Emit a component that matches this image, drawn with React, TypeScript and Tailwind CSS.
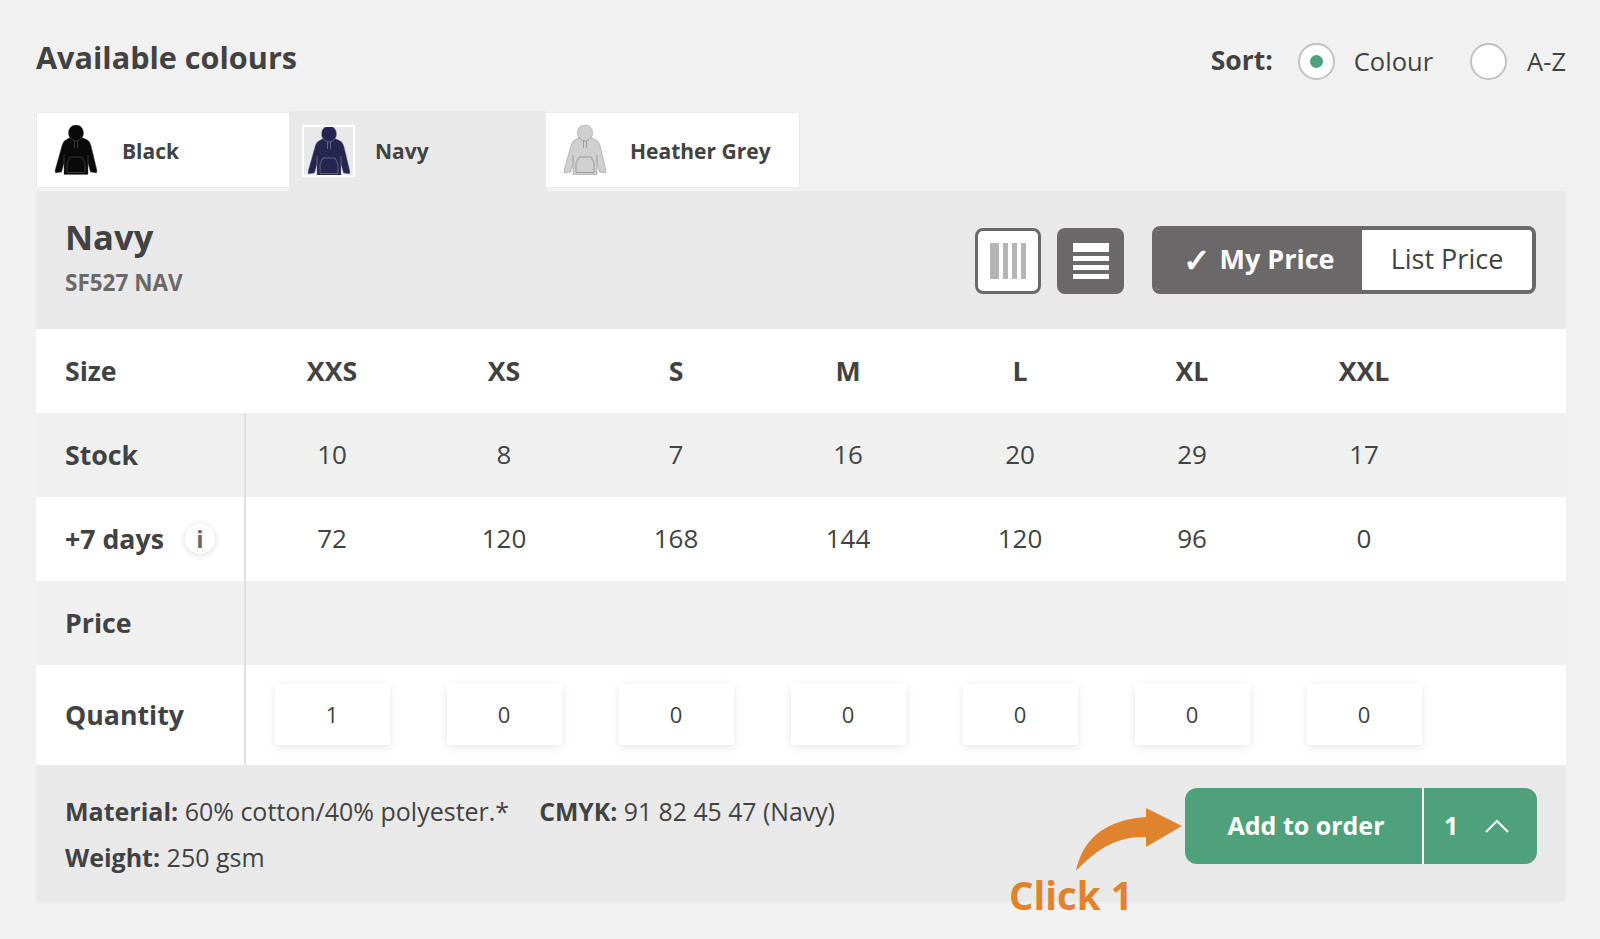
const SIZES = ["XXS", "XS", "S", "M", "L", "XL", "XXL"];
const STOCK = [10, 8, 7, 16, 20, 29, 17];
const INCOMING = [72, 120, 168, 144, 120, 96, 0];
const QUANTITY = [1, 0, 0, 0, 0, 0, 0];

function Hoodie({ fill, line }: { fill: string; line: string }) {
  return (
    <svg viewBox="0 0 44 50" className="w-[44px] h-[50px] shrink-0">
      <path
        d="M22 0c-4.500 0-7.500 3.500-7.500 8 0 2 .5 3.500 1.500 4.500l-3.500 2c-2.500 1.200-3.500 3-4.500 6L1 45.500l.5 2.500 6-1 2.500-8.500V49.500h24V38.500l2.500 8.500 6 1 .5-2.500L37 20.500c-1-3-2-4.800-4.500-6l-4.500-2c1-1 1.500-2.500 1.500-4.500C29.500 3.500 26.500 0 22 0z"
        fill={fill}
        stroke={line}
        strokeWidth={0.4}
      />
      <path
        d="M16 12.500c2 2.500 4 3.500 6 3.500s4-1 6-3.500M20.500 16v7M23.500 16v7M13 38l3-6h12l3 6v9.500H13zM10 38v-8M34 38v-8"
        fill="none"
        stroke={line}
        strokeWidth={0.6}
      />
    </svg>
  );
}

function Radio({ checked }: { checked?: boolean }) {
  return (
    <span className="w-[37px] h-[37px] rounded-full bg-white border-2 border-[#c2c2c2] flex items-center justify-center shrink-0">
      {checked && <span className="w-[13px] h-[13px] rounded-full bg-[#4fa17b]" />}
    </span>
  );
}

function Tab({ label, fill, line, active, width, gap }: { label: string; fill: string; line: string; active?: boolean; width: string; gap: string }) {
  if (active) {
    return (
      <div className={`${width} h-[80px] bg-[#e9e9e9] flex items-center pl-[13px] ${gap}`}>
        <div className="w-[53px] h-[52px] border-2 border-white flex items-center justify-center overflow-hidden">
          <Hoodie fill={fill} line={line} />
        </div>
        <span className="text-[21px] font-bold text-[#424242] mt-[1px]">{label}</span>
      </div>
    );
  }
  return (
    <div className={`${width} h-[74px] my-[2px] bg-white flex items-center pl-[17px] ${gap} shadow-[0_0_0_1px_#ebebeb]`}>
      <Hoodie fill={fill} line={line} />
      <span className="text-[21px] font-bold text-[#424242] mt-[3px]">{label}</span>
    </div>
  );
}

function Row({ label, extra, bg, h, children }: { label: string; extra?: React.ReactNode; bg: string; h: string; children?: React.ReactNode }) {
  return (
    <div className={`flex ${bg} ${h}`}>
      <div className="w-[210px] pl-[29px] flex items-center border-r-[2px] border-[#dfdfdf] text-[26.7px] font-bold text-[#424242] justify-between pr-[32px]">
        <span>{label}</span>
        {extra}
      </div>
      <div className="flex">{children}</div>
    </div>
  );
}

function Cell({ children }: { children: React.ReactNode }) {
  return <div className="w-[172px] flex items-center justify-center text-[26px] text-[#424242] pb-[1px]">{children}</div>;
}

export default function App() {
  return (
    <div
      className="w-[1600px] h-[939px] bg-[#f1f1f1] px-[36px] pt-[37px] overflow-hidden text-[#424242]"
      style={{ fontFamily: '"Open Sans", "Noto Sans", sans-serif' }}
    >
      <div className="flex items-start justify-between h-[74px]">
        <h2 className="text-[30.6px] leading-[42px] font-bold -mt-[1px]">Available colours</h2>
        <div className="flex items-center h-[48px] text-[25.5px] -mr-[2px]">
          <span className="font-bold text-[26.500px] mr-[25px]">Sort:</span>
          <Radio checked />
          <span className="ml-[19px] mr-[37px]">Colour</span>
          <Radio />
          <span className="ml-[20px]">A-Z</span>
        </div>
      </div>

      <div className="flex h-[80px] pl-[1px]">
        <Tab label="Black" fill="#0a0a0a" line="#555555" width="w-[252px]" gap="gap-[24px]" />
        <Tab label="Navy" fill="#25264f" line="#8d8fa8" active width="w-[257px]" gap="gap-[20px]" />
        <Tab label="Heather Grey" fill="#d0d0d0" line="#777777" width="w-[253px]" gap="gap-[23px]" />
      </div>

      <div className="relative w-[1530px]">
        <div className="h-[138px] bg-[#e9e9e9] flex items-center justify-between pl-[29px] pr-[30px]">
          <div className="flex flex-col -mt-[6px]">
            <span className="text-[34.6px] leading-[46px] font-bold text-[#424242]">Navy</span>
            <span className="text-[22.5px] leading-[34px] font-bold text-[#6b6869] mt-[6px]">SF527 NAV</span>
          </div>
          <div className="flex items-center mt-[1px]">
            <div className="w-[66px] h-[66px] rounded-[8px] bg-white border-[3px] border-[#6b6869] flex items-center justify-center gap-[4px]">
              <span className="w-[9px] h-[36px] bg-[#b5b5b5]" />
              <span className="w-[5px] h-[36px] bg-[#b5b5b5]" />
              <span className="w-[5px] h-[36px] bg-[#b5b5b5]" />
              <span className="w-[5px] h-[36px] bg-[#b5b5b5]" />
            </div>
            <div className="w-[67px] h-[66px] rounded-[8px] bg-[#6b6869] ml-[16px] flex flex-col items-center justify-center gap-[4px]">
              <span className="w-[36px] h-[9px] bg-white" />
              <span className="w-[36px] h-[5px] bg-white" />
              <span className="w-[36px] h-[5px] bg-white" />
              <span className="w-[36px] h-[5px] bg-white" />
            </div>
            <div className="w-[384px] h-[68px] ml-[28px] rounded-[8px] border-[4px] border-[#6b6869] flex overflow-hidden -mt-[2px] text-[27px]">
              <div className="w-[206px] bg-[#6b6869] text-white font-bold flex items-center justify-center gap-[8px]">
                <span className="text-[33px] leading-none">✓</span>
                <span>My Price</span>
              </div>
              <div className="flex-1 bg-white text-[#424242] flex items-center justify-center">List Price</div>
            </div>
          </div>
        </div>

        <div className="flex h-[84px] bg-white text-[26.7px] font-bold text-[#424242]">
          <div className="w-[210px] pl-[29px] flex items-center">Size</div>
          {SIZES.map((size) => (
            <div key={size} className="w-[172px] flex items-center justify-center">{size}</div>
          ))}
        </div>

        <Row label="Stock" bg="bg-[#f0f0f0]" h="h-[84px]">
          {STOCK.map((n, i) => <Cell key={i}>{n}</Cell>)}
        </Row>

        <Row
          label="+7 days"
          bg="bg-white"
          h="h-[84px]"
          extra={
            <span className="w-[30px] h-[30px] rounded-full bg-white shadow-[0_1px_7px_rgba(0,0,0,0.16)] flex items-center justify-center text-[24px] font-bold text-[#6b6869] -mr-[3px]">i</span>
          }
        >
          {INCOMING.map((n, i) => <Cell key={i}>{n}</Cell>)}
        </Row>

        <Row label="Price" bg="bg-[#f0f0f0]" h="h-[84px]" />

        <Row label="Quantity" bg="bg-white" h="h-[100px]">
          {QUANTITY.map((n, i) => (
            <Cell key={i}>
              <div className="w-[115px] h-[61px] bg-white shadow-[0_2px_9px_rgba(0,0,0,0.1)] flex items-center justify-center text-[22px] pb-[1px]">{n}</div>
            </Cell>
          ))}
        </Row>

        <div className="h-[137px] bg-[#e9e9e9] flex justify-between pl-[29px] pr-[29px] pt-[23px]">
          <div className="text-[25px] leading-[46px] text-[#424242]">
            <div className="flex gap-[30px]">
              <span><b className="font-bold">Material:</b> 60% cotton/40% polyester.*</span>
              <span className="text-[24.8px]"><b className="font-bold">CMYK:</b> 91 82 45 47 (Navy)</span>
            </div>
            <div><b className="font-bold">Weight:</b> 250 gsm</div>
          </div>
          <div className="flex w-[352px] h-[76px] rounded-[12px] bg-[#4fa17b] text-white text-[25px] font-bold overflow-hidden">
            <div className="w-[239px] flex items-center justify-center border-r-[2px] border-white pl-[5px]">Add to order</div>
            <div className="flex-1 flex items-center pl-[20px]">
              <span>1</span>
              <svg viewBox="0 0 24 14" className="w-[24px] h-[14px] ml-[27px]" fill="none" stroke="#ffffff" strokeWidth={2}>
                <path d="M1 13L12 2l11 11" />
              </svg>
            </div>
          </div>
        </div>

        {/* annotation over the footer */}
        <svg viewBox="0 0 110 66" className="absolute left-[1040px] top-[615px] w-[110px] h-[66px]">
          <path
            d="M0 65C6 36 26 14 70 11L70 2 106 20 70 41 70 31C42 30 22 42 0 65z"
            fill="#e0832f"
          />
        </svg>
        <span className="absolute left-[973px] top-[678px] text-[38.500px] leading-[52px] font-bold text-[#e0832f]">Click 1</span>
      </div>
    </div>
  );
}
